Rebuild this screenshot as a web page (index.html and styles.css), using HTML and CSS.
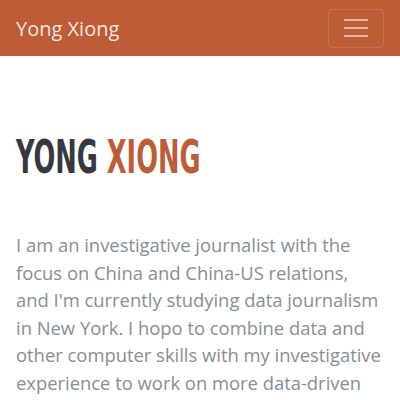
FILE: index.html
```html
<!DOCTYPE html>
<html>
<head>
<meta charset="utf-8">
<link rel="stylesheet" href="styles.css">
</head>
<body>
<nav class="navbar">
  <span class="brand">Yong Xiong</span>
  <button class="toggler" aria-label="Toggle navigation">
    <svg width="24" height="24" viewBox="0 0 24 24"><path d="M0 4h24M0 12h24M0 20h24" stroke="rgba(255,255,255,0.55)" stroke-width="2"/></svg>
  </button>
</nav>
<section class="about">
  <h1 class="title"><span class="t-inner">YONG <span class="accent">XIONG</span></span></h1>
  <p class="lead">I am an investigative journalist with the focus on China and China-US relations, and I'm currently studying data journalism in New York. I hopo to combine data and other computer skills with my investigative experience to work on more data-driven stories.</p>
</section>
</body>
</html>
```
FILE: styles.css
```css
html, body { margin: 0; padding: 0; }
body {
  font-family: "Open Sans", Lato, sans-serif;
  background: #fff;
  color: #868e96;
  overflow: hidden;
}
.navbar {
  background: #bd5d38;
  height: 56px;
  display: flex;
  align-items: center;
  justify-content: space-between;
  padding: 0 16px;
  box-sizing: border-box;
}
.brand {
  color: rgba(255,255,255,0.85);
  font-size: 20px;
}
.toggler {
  width: 56px;
  height: 39px;
  background: transparent;
  border: 1px solid rgba(255,255,255,0.12);
  border-radius: 4px;
  display: flex;
  align-items: center;
  justify-content: center;
  padding: 0;
}
.about { padding: 78px 16px 0; }
.title {
  margin: 0;
  font-family: "DejaVu Sans Condensed", "DejaVu Sans", sans-serif;
  font-weight: bold;
  font-size: 46px;
  line-height: 1;
  color: #343a40;
  white-space: nowrap;
}
.t-inner { display: inline-block; transform: scaleX(0.62); transform-origin: left; }
.accent { color: #bd5d38; }
.lead {
  margin: 51px 0 0;
  font-size: 18.4px;
  line-height: 1.5;
  font-weight: 400;
}
```
